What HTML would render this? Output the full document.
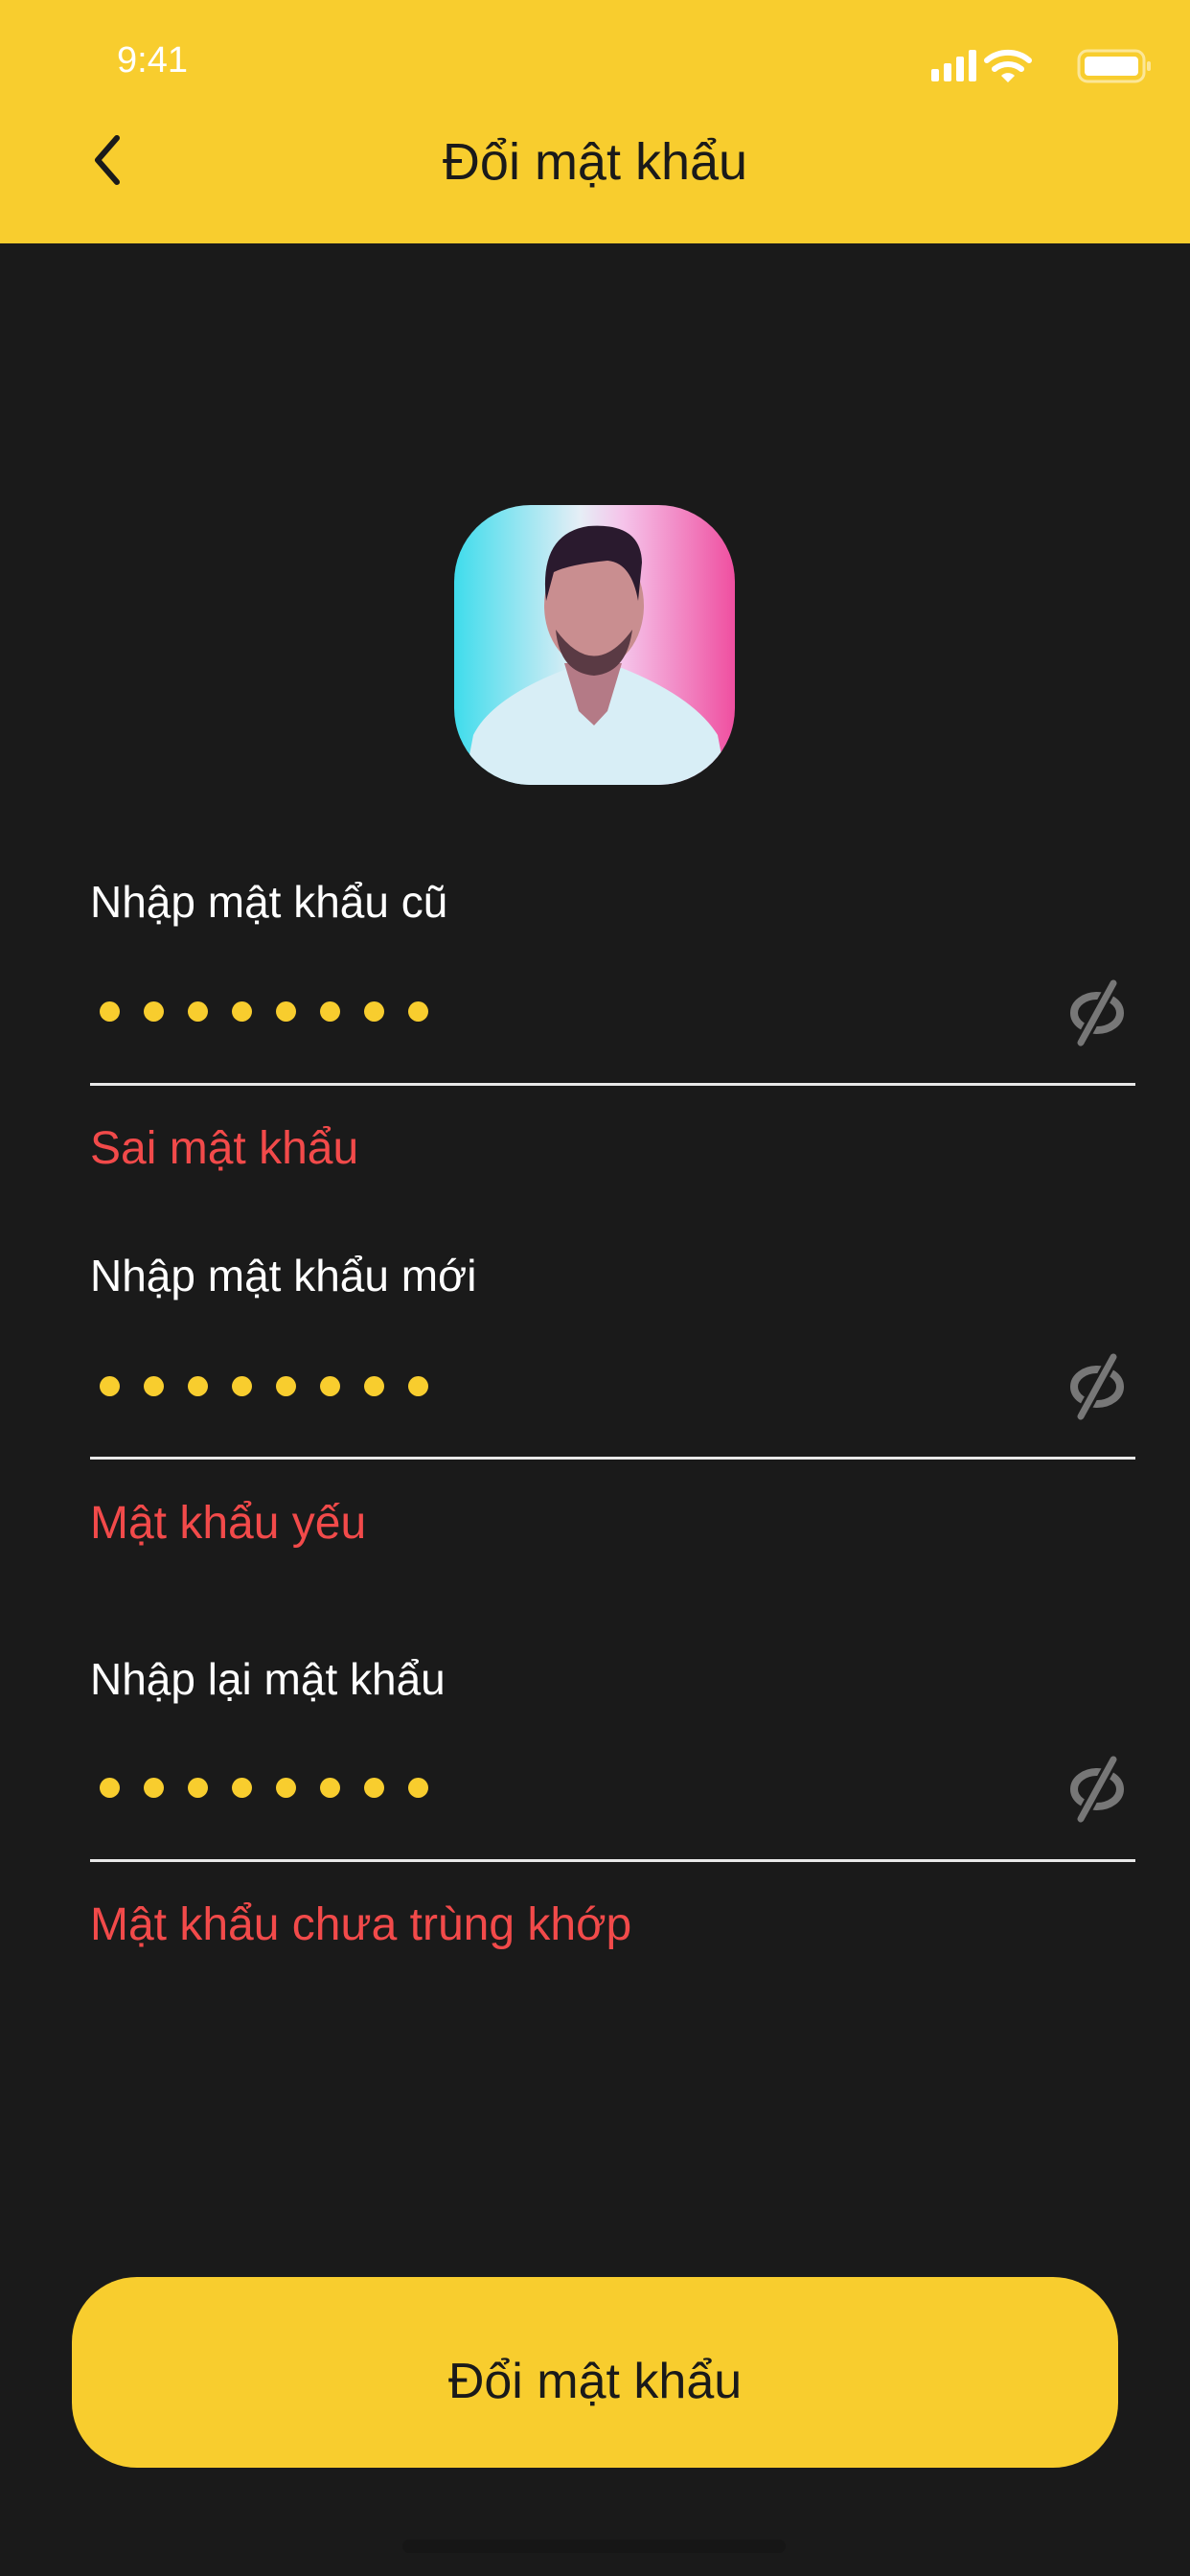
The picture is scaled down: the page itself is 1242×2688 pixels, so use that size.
<!DOCTYPE html>
<html><head><meta charset="utf-8">
<style>
*{margin:0;padding:0;box-sizing:border-box}
body{width:1242px;height:2688px;background:#1a1a1a;font-family:"Liberation Sans","DejaVu Sans",sans-serif;position:relative;overflow:hidden}
.hdr{position:absolute;left:0;top:0;width:1242px;height:254px;background:#f8cd2e}
.abs{position:absolute;white-space:nowrap}
.lbl{color:#fff;font-size:46px;left:94px;line-height:1}
.err{color:#f24a4a;font-size:48px;left:94px;line-height:1}
.line{position:absolute;left:94px;width:1091px;height:3px;background:#e8e8e8}
.dots{position:absolute;left:104px}
.dots i{position:absolute;top:0;width:21px;height:21px;border-radius:50%;background:#f8cd2e}
.eye{position:absolute;left:1110px}
</style></head><body>
<div class="hdr"></div>
<div class="abs" style="left:122px;top:42px;color:#fff;font-size:38px">9:41</div>
<svg class="abs" style="left:970px;top:48px" width="240" height="40" viewBox="0 0 240 40">
<rect x="2" y="24" width="8" height="13" rx="2" fill="#fff"/>
<rect x="15" y="18" width="8" height="19" rx="2" fill="#fff"/>
<rect x="28" y="11" width="8" height="26" rx="2" fill="#fff"/>
<rect x="41" y="4" width="8" height="33" rx="2" fill="#fff"/>
<path d="M60 15 A34 34 0 0 1 104 15" stroke="#fff" stroke-width="6" fill="none" stroke-linecap="round"/>
<path d="M68 24 A22 22 0 0 1 96 24" stroke="#fff" stroke-width="6" fill="none" stroke-linecap="round"/>
<path d="M82 38 L75 31 A10 10 0 0 1 89 31 Z" fill="#fff"/>
<rect x="156" y="5" width="68" height="32" rx="9" fill="none" stroke="#fff" stroke-opacity=".5" stroke-width="3"/>
<rect x="162" y="11" width="56" height="20" rx="4" fill="#fff"/>
<rect x="227" y="16" width="4" height="10" rx="2" fill="#fff" fill-opacity=".5"/>
</svg>
<svg class="abs" style="left:88px;top:138px" width="44" height="58" viewBox="0 0 44 58"><path d="M34 6 L14 29 L34 52" stroke="#1a1a1a" stroke-width="6" fill="none" stroke-linecap="round" stroke-linejoin="round"/></svg>
<div class="abs" style="left:0;width:1242px;text-align:center;top:138px;font-size:54px;color:#1a1a1a">Đổi mật khẩu</div>

<svg class="abs" style="left:474px;top:527px" width="293" height="292" viewBox="0 0 293 292">
<defs>
<clipPath id="c"><rect width="293" height="292" rx="80"/></clipPath>
<linearGradient id="g" x1="0" x2="1"><stop offset="0" stop-color="#3fdcec"/><stop offset=".45" stop-color="#e6eef6"/><stop offset=".6" stop-color="#f5c4ea"/><stop offset="1" stop-color="#ef4fa0"/></linearGradient>
</defs>
<g clip-path="url(#c)">
<rect width="293" height="292" fill="url(#g)"/>
<path d="M10 292 L20 240 Q40 200 120 170 L175 170 Q250 200 275 240 L285 292Z" fill="#d8eef6"/>
<path d="M115 165 L175 165 L160 215 L146 230 L130 215Z" fill="#b47a86"/>
<ellipse cx="146" cy="105" rx="52" ry="66" fill="#c98e90"/>
<path d="M96 100 Q88 30 140 22 Q195 18 196 60 L192 100 Q185 60 160 58 Q120 62 104 70 Z" fill="#2a1a2e"/>
<path d="M106 130 Q146 185 186 130 Q180 175 146 178 Q110 175 106 130Z" fill="#5a3a44"/>
</g></svg>

<div class="abs lbl" style="top:918px">Nhập mật khẩu cũ</div>
<div class="dots" style="top:1045px"><i style="left:0"></i><i style="left:46px"></i><i style="left:92px"></i><i style="left:138px"></i><i style="left:184px"></i><i style="left:230px"></i><i style="left:276px"></i><i style="left:322px"></i></div>
<svg class="eye" style="top:1022px" width="70" height="70" viewBox="0 0 70 70"><ellipse cx="35" cy="35" rx="24" ry="18" stroke="#777" stroke-width="8" fill="none"/><path d="M52 4 L18 66" stroke="#1a1a1a" stroke-width="13"/><path d="M52 4 L18 66" stroke="#777" stroke-width="7" stroke-linecap="round"/></svg>
<div class="line" style="top:1130px"></div>
<div class="abs err" style="top:1175px">Sai mật khẩu</div>

<div class="abs lbl" style="top:1308px">Nhập mật khẩu mới</div>
<div class="dots" style="top:1436px"><i style="left:0"></i><i style="left:46px"></i><i style="left:92px"></i><i style="left:138px"></i><i style="left:184px"></i><i style="left:230px"></i><i style="left:276px"></i><i style="left:322px"></i></div>
<svg class="eye" style="top:1412px" width="70" height="70" viewBox="0 0 70 70"><ellipse cx="35" cy="35" rx="24" ry="18" stroke="#777" stroke-width="8" fill="none"/><path d="M52 4 L18 66" stroke="#1a1a1a" stroke-width="13"/><path d="M52 4 L18 66" stroke="#777" stroke-width="7" stroke-linecap="round"/></svg>
<div class="line" style="top:1520px"></div>
<div class="abs err" style="top:1566px">Mật khẩu yếu</div>

<div class="abs lbl" style="top:1729px">Nhập lại mật khẩu</div>
<div class="dots" style="top:1855px"><i style="left:0"></i><i style="left:46px"></i><i style="left:92px"></i><i style="left:138px"></i><i style="left:184px"></i><i style="left:230px"></i><i style="left:276px"></i><i style="left:322px"></i></div>
<svg class="eye" style="top:1832px" width="70" height="70" viewBox="0 0 70 70"><ellipse cx="35" cy="35" rx="24" ry="18" stroke="#777" stroke-width="8" fill="none"/><path d="M52 4 L18 66" stroke="#1a1a1a" stroke-width="13"/><path d="M52 4 L18 66" stroke="#777" stroke-width="7" stroke-linecap="round"/></svg>
<div class="line" style="top:1940px"></div>
<div class="abs err" style="top:1985px">Mật khẩu chưa trùng khớp</div>

<div class="abs" style="left:75px;top:2376px;width:1092px;height:199px;border-radius:68px;background:#f8cd2e;color:#1a1a1a;font-size:52px;text-align:center;line-height:219px">Đổi mật khẩu</div>
<div class="abs" style="left:420px;top:2650px;width:400px;height:14px;border-radius:7px;background:#161616"></div>
</body></html>
